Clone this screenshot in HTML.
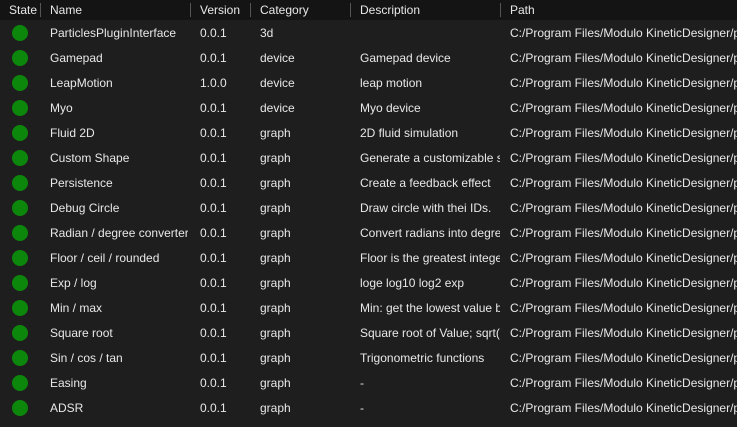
<!DOCTYPE html><html><head><style>
body{margin:0;width:737px;height:427px;background:#1e1e1e;overflow:hidden;font-family:"Liberation Sans",sans-serif;font-size:12px;color:#e8e8e8;}
.h{position:absolute;top:0;left:0;width:737px;height:20px;background:#141414;}
.c{position:absolute;white-space:nowrap;overflow:hidden;line-height:14px;}
.s{position:absolute;width:1px;height:14px;top:3px;background:#555;}
.dot{position:absolute;left:12px;width:16px;height:16px;border-radius:50%;background:#0c870c;}
</style></head><body>
<div class="h">
<div class="c" style="left:9px;top:3px">State</div><div class="s" style="left:40px"></div>
<div class="c" style="left:50px;top:3px">Name</div><div class="s" style="left:190px"></div>
<div class="c" style="left:200px;top:3px">Version</div><div class="s" style="left:250px"></div>
<div class="c" style="left:260px;top:3px">Category</div><div class="s" style="left:350px"></div>
<div class="c" style="left:360px;top:3px">Description</div><div class="s" style="left:500px"></div>
<div class="c" style="left:510px;top:3px">Path</div>
</div>
<div id="r"></div>
<script>
var d=[["ParticlesPluginInterface","0.0.1","3d",""],["Gamepad","0.0.1","device","Gamepad device"],["LeapMotion","1.0.0","device","leap motion"],["Myo","0.0.1","device","Myo device"],["Fluid 2D","0.0.1","graph","2D fluid simulation"],["Custom Shape","0.0.1","graph","Generate a customizable shape"],["Persistence","0.0.1","graph","Create a feedback effect"],["Debug Circle","0.0.1","graph","Draw circle with thei IDs."],["Radian / degree converter","0.0.1","graph","Convert radians into degrees"],["Floor / ceil / rounded","0.0.1","graph","Floor is the greatest integer"],["Exp / log","0.0.1","graph","loge log10 log2 exp"],["Min / max","0.0.1","graph","Min: get the lowest value between"],["Square root","0.0.1","graph","Square root of Value; sqrt()"],["Sin / cos / tan","0.0.1","graph","Trigonometric functions"],["Easing","0.0.1","graph","-"],["ADSR","0.0.1","graph","-"]];
var h="";d.forEach(function(r,i){var y=21+i*25,t=y+5;
h+='<div class="dot" style="top:'+(y+4)+'px"></div><div class="c" style="left:50px;top:'+t+'px;width:138px">'+r[0]+'</div><div class="c" style="left:200px;top:'+t+'px">'+r[1]+'</div><div class="c" style="left:260px;top:'+t+'px">'+r[2]+'</div><div class="c" style="left:360px;top:'+t+'px;width:140px">'+r[3]+'</div><div class="c" style="left:510px;top:'+t+'px;width:227px">C:/Program Files/Modulo KineticDesigner/plugins</div>';});
document.getElementById("r").innerHTML=h;
</script>
</body></html>
